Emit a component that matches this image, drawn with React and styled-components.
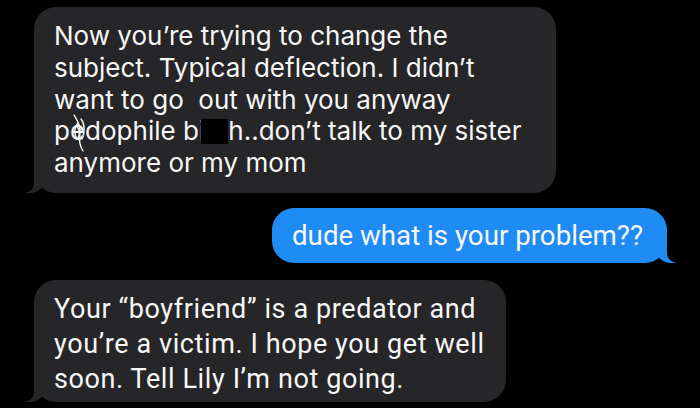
import React from 'react'
import styled, { createGlobalStyle } from 'styled-components'

const GlobalStyle = createGlobalStyle`
  html, body {
    margin: 0;
    padding: 0;
    background: #000;
  }
`

const Thread = styled.div`
  width: 700px;
  height: 408px;
  overflow: hidden;
  background: #000;
  display: flex;
  flex-direction: column;
  padding-top: 7px;
  box-sizing: border-box;
`

const Bubble = styled.div`
  position: relative;
  box-sizing: border-box;
  width: ${p => p.width}px;
  padding: ${p => p.pad};
  margin-top: ${p => p.gap || 0}px;
  border-radius: 22px;
  color: #f7f7f7;
  font-family: ${p => p.narrow ? 'Roboto, "Liberation Sans", sans-serif' : 'Inter, "Noto Sans", sans-serif'};
  font-size: ${p => p.size}px;
  line-height: ${p => p.lh}px;
  letter-spacing: ${p => p.ls || 0}px;
  white-space: nowrap;
  background: ${p => (p.mine ? '#1f8bf5' : '#262628')};
  align-self: ${p => (p.mine ? 'flex-end' : 'flex-start')};
  margin-left: ${p => (p.mine ? 0 : 34)}px;
  margin-right: ${p => (p.mine ? 33 : 0)}px;

  /* tail */
  &::before {
    content: '';
    position: absolute;
    bottom: 0;
    ${p => (p.mine ? 'right: -9px;' : 'left: -9px;')}
    width: 21px;
    height: 22px;
    background: ${p => (p.mine ? '#1f8bf5' : '#262628')};
    ${p => (p.mine ? 'border-bottom-left-radius: 16px;' : 'border-bottom-right-radius: 16px;')}
  }
  &::after {
    content: '';
    position: absolute;
    bottom: 0;
    ${p => (p.mine ? 'right: -11px;' : 'left: -11px;')}
    width: 11px;
    height: 22px;
    background: #000;
    ${p => (p.mine ? 'border-bottom-left-radius: 10px;' : 'border-bottom-right-radius: 10px;')}
  }
`

const Censor = styled.span`
  position: relative;
  &::after {
    content: '';
    position: absolute;
    left: 2px;
    right: 0;
    top: 4px;
    bottom: 2px;
    background: #000;
  }
`

const Scribbled = styled.span`
  position: relative;
`

const Scribble = styled.svg`
  position: absolute;
  left: 1px;
  top: -1px;
  overflow: visible;
`

const Strike = () => (
  <Scribble width="16" height="38" viewBox="0 0 16 38" fill="none" stroke="#f4f4f4" strokeWidth="1.4" strokeLinecap="round">
    <path d="M3 1 C6 6, 9 10, 9 17 C9 24, 7 29, 12 37" />
    <path d="M7 9 C3 13, 3 21, 6 25 C9 22, 10 14, 7 9 Z" />
    <path d="M10 5 C14 10, 14 18, 11 25" />
    <path d="M5 12 C8 14, 9 20, 8 26" />
  </Scribble>
)

export default function App() {
  return (
    <>
      <GlobalStyle />
      <Thread>
        <Bubble width={522} pad="13px 20px 14px" size={26} lh={31.75}>
          Now you’re trying to change the<br />
          subject. Typical deflection. I didn’t<br />
          want to go&nbsp; out with you anyway<br />
          p<Scribbled>e<Strike /></Scribbled>dophile b<Censor>itc</Censor>h..don’t talk to my sister<br />
          anymore or my mom
        </Bubble>
        <Bubble mine width={395} pad="10px 24px 10px 20px" size={27.7} lh={35} narrow gap={15}>
          dude what is your problem??
        </Bubble>
        <Bubble width={472} pad="12px 20px 5px" size={27} lh={35} ls={0.6} narrow gap={17}>
          Your “boyfriend” is a predator and<br />
          you’re a victim. I hope you get well<br />
          soon. Tell Lily I’m not going.
        </Bubble>
      </Thread>
    </>
  )
}
